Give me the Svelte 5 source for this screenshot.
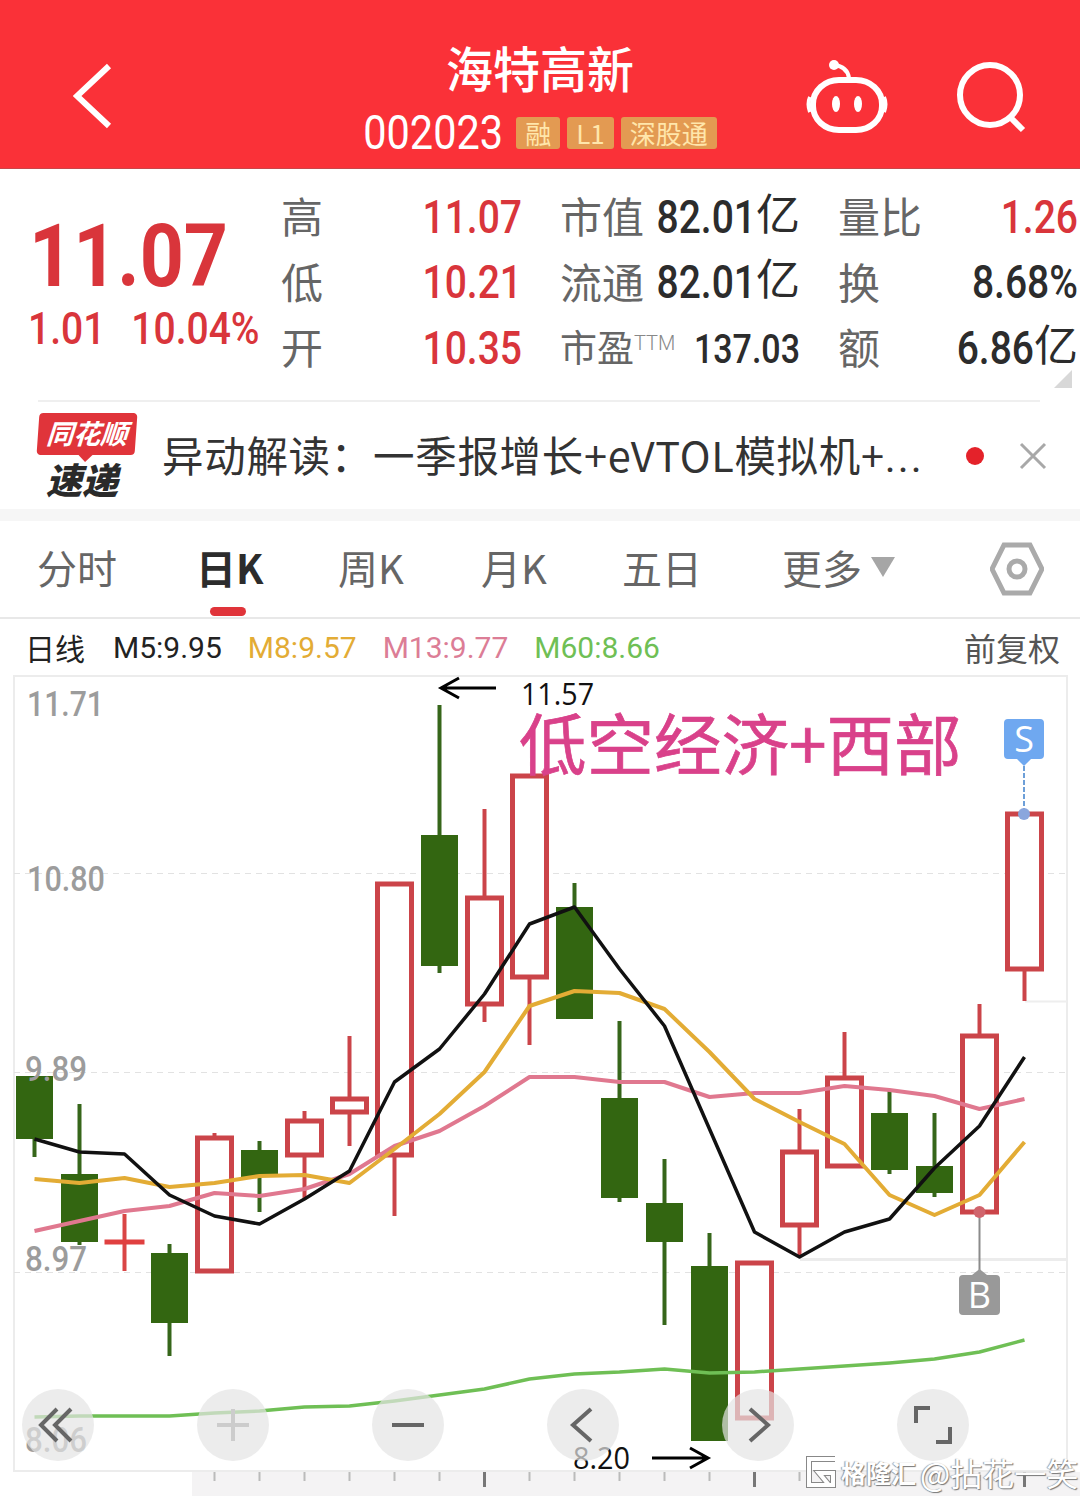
<script>
	const X0 = 34.5;
	const STEP = 45;
	// top/bottom of wick and body, in page y
	const candles = [
		{ up: false, wt: 1077, bt: 1077, bb: 1140, wb: 1158 },
		{ up: false, wt: 1105, bt: 1175, bb: 1243, wb: 1246 },
		{ up: true, wt: 1215, bt: 1243, bb: 1244, wb: 1272, cross: true },
		{ up: false, wt: 1245, bt: 1254, bb: 1324, wb: 1357 },
		{ up: true, wt: 1134, bt: 1139, bb: 1272, wb: 1272 },
		{ up: false, wt: 1142, bt: 1151, bb: 1178, wb: 1213 },
		{ up: true, wt: 1112, bt: 1122, bb: 1156, wb: 1200 },
		{ up: true, wt: 1037, bt: 1100, bb: 1113, wb: 1147 },
		{ up: true, wt: 885, bt: 885, bb: 1156, wb: 1217 },
		{ up: false, wt: 706, bt: 836, bb: 967, wb: 974 },
		{ up: true, wt: 810, bt: 899, bb: 1005, wb: 1023 },
		{ up: true, wt: 777, bt: 777, bb: 978, wb: 1046 },
		{ up: false, wt: 884, bt: 908, bb: 1020, wb: 1020 },
		{ up: false, wt: 1022, bt: 1099, bb: 1199, wb: 1203 },
		{ up: false, wt: 1160, bt: 1204, bb: 1243, wb: 1326 },
		{ up: false, wt: 1234, bt: 1267, bb: 1442, wb: 1442 },
		{ up: true, wt: 1264, bt: 1264, bb: 1419, wb: 1419 },
		{ up: true, wt: 1110, bt: 1153, bb: 1226, wb: 1258 },
		{ up: true, wt: 1033, bt: 1079, bb: 1167, wb: 1167 },
		{ up: false, wt: 1092, bt: 1114, bb: 1171, wb: 1175 },
		{ up: false, wt: 1114, bt: 1167, bb: 1194, wb: 1198 },
		{ up: true, wt: 1005, bt: 1037, bb: 1213, wb: 1213 },
		{ up: true, wt: 815, bt: 815, bb: 970, wb: 1002 }
	];

	const m5 = [1140, 1153, 1155, 1196, 1217, 1225, 1200, 1172, 1083, 1050, 995, 925, 908, 970, 1027, 1130, 1233, 1258, 1233, 1220, 1169, 1127, 1058];
	const m8 = [1180, 1184, 1179, 1188, 1184, 1177, 1176, 1184, 1150, 1115, 1073, 1007, 992, 994, 1010, 1053, 1100, 1123, 1145, 1196, 1216, 1196, 1143];
	const m13 = [1232, 1222, 1212, 1207, 1194, 1197, 1190, 1175, 1147, 1132, 1107, 1078, 1078, 1083, 1083, 1098, 1094, 1094, 1087, 1091, 1097, 1110, 1100];
	const m60 = [1418, 1417, 1417, 1417, 1414, 1412, 1408, 1407, 1402, 1396, 1390, 1380, 1375, 1373, 1370, 1374, 1373, 1370, 1367, 1364, 1360, 1353, 1341];

	const toPoints = (ys) => ys.map((y, i) => `${X0 + i * STEP},${y}`).join(' ');

	const lines = [
		{ ys: m60, color: '#6fbf55', width: 3.5 },
		{ ys: m13, color: '#e0788f', width: 4 },
		{ ys: m8, color: '#e3ac35', width: 4 },
		{ ys: m5, color: '#111', width: 3.5 }
	];

	const ticks = [4, 5, 6, 7, 8, 9, 10, 11, 12, 13, 14, 15, 16, 17, 18, 19, 20, 21, 22];
	const majorTicks = [10, 16, 22];
	const tabs = ['分时', '日K', '周K', '月K', '五日'];
</script>

<div class="page">
	<header class="top">
		<svg class="back" width="40" height="66" viewBox="0 0 40 66">
			<path d="M36 3 L4 33 L36 63" />
		</svg>
		<div class="title">
			<div class="name">海特高新</div>
			<div class="code-row">
				<span class="code">002023</span>
				<span class="tag">融</span>
				<span class="tag">L1</span>
				<span class="tag">深股通</span>
			</div>
		</div>
		<div class="top-icons">
			<svg width="82" height="76" viewBox="0 0 82 76">
				<rect x="7" y="20" width="69" height="50" rx="26" ry="24" class="line" />
				<path d="M4 37 Q1 44 4 52 M78 37 Q81 44 78 52" class="line thin" />
				<path d="M28 5 C37 6 42 11 43 18" class="line thin" />
				<circle cx="28" cy="5" r="5" fill="#fff" />
				<ellipse cx="30" cy="44" rx="4" ry="8" fill="#fff" />
				<ellipse cx="52" cy="44" rx="4" ry="8" fill="#fff" />
			</svg>
			<svg width="72" height="76" viewBox="0 0 72 76">
				<circle cx="35" cy="35" r="30" class="line" />
				<path d="M56 58 L68 70" class="line" />
			</svg>
		</div>
	</header>

	<section class="quote">
		<div class="price">
			<div class="big">11.07</div>
			<div class="change"><span>1.01</span><span>10.04%</span></div>
		</div>
		<div class="stats">
			<div class="cell"><span class="k">高</span><span class="v red">11.07</span></div>
			<div class="cell"><span class="k">市值</span><span class="v">82.01<i>亿</i></span></div>
			<div class="cell"><span class="k">量比</span><span class="v red">1.26</span></div>
			<div class="cell"><span class="k">低</span><span class="v red">10.21</span></div>
			<div class="cell"><span class="k">流通</span><span class="v">82.01<i>亿</i></span></div>
			<div class="cell"><span class="k">换</span><span class="v">8.68%</span></div>
			<div class="cell"><span class="k">开</span><span class="v red">10.35</span></div>
			<div class="cell"><span class="k pe">市盈<sup>TTM</sup></span><span class="v small">137.03</span></div>
			<div class="cell"><span class="k">额</span><span class="v">6.86<i>亿</i></span></div>
		</div>
		<span class="corner"></span>
	</section>

	<section class="news">
		<div class="logo">
			<div class="bubble">同花顺</div>
			<div class="sudi">速递</div>
		</div>
		<div class="headline">异动解读：一季报增长+eVTOL模拟机+<span class="more">...</span></div>
		<span class="dot"></span>
		<svg width="30" height="30" viewBox="0 0 30 30" class="close">
			<path d="M3 3 L27 27 M27 3 L3 27" />
		</svg>
	</section>

	<nav class="tabs">
		{#each tabs as tab, i}
			<div class="tab" class:active={i === 1}>{tab}</div>
		{/each}
		<div class="tab">更多<span class="caret"></span></div>
		<svg width="54" height="54" viewBox="0 0 54 54" class="gear">
			<path d="M14 3 H40 L52 27 L40 51 H14 L2 27 Z" />
			<circle cx="27" cy="27" r="8" />
		</svg>
	</nav>

	<div class="legend">
		<span class="ri">日线</span>
		<span class="ma">M5:9.95</span>
		<span class="ma m8">M8:9.57</span>
		<span class="ma m13">M13:9.77</span>
		<span class="ma m60">M60:8.66</span>
		<span class="fq">前复权</span>
	</div>

	<div class="chart">
		<svg width="1080" height="821" viewBox="0 676 1080 821">
			<rect x="192" y="1473" width="888" height="24" fill="#f4f3f4" />
			<rect x="14" y="677" width="1053" height="795" fill="none" stroke="#ececec" stroke-width="2" />
			<g stroke="#e2e2e2" stroke-dasharray="6 5">
				<line x1="14" x2="1066" y1="874.5" y2="874.5" />
				<line x1="14" x2="1066" y1="1073.5" y2="1073.5" />
				<line x1="14" x2="1066" y1="1273.5" y2="1273.5" />
			</g>
			<line x1="800" x2="1067" y1="1260.5" y2="1260.5" stroke="#ececec" stroke-width="3" />
			<line x1="1025" x2="1067" y1="1002.5" y2="1002.5" stroke="#eee" stroke-width="2" />

			{#each ticks as t}
				<line
					x1={X0 + t * STEP}
					x2={X0 + t * STEP}
					y1="1473"
					y2={majorTicks.includes(t) ? 1488 : 1482}
					stroke={majorTicks.includes(t) ? '#777' : '#bbb'}
					stroke-width={majorTicks.includes(t) ? 3 : 2}
				/>
			{/each}

			{#each candles as c, i}
				{@const x = X0 + i * STEP}
				{#if c.cross}
					<line x1={x} x2={x} y1={c.wt} y2={c.wb} stroke="#d94545" stroke-width="4" />
					<line x1={x - 20} x2={x + 20} y1={c.bt} y2={c.bt} stroke="#e04040" stroke-width="5" />
				{:else if c.up}
					<line x1={x} x2={x} y1={c.wt} y2={c.bt} class="red-stroke" stroke-width="4" />
					<line x1={x} x2={x} y1={c.bb} y2={c.wb} class="red-stroke" stroke-width="4" />
					<rect x={x - 17} y={c.bt} width="34" height={c.bb - c.bt} fill="#fff" class="red-stroke" stroke-width="5" />
				{:else}
					<line x1={x} x2={x} y1={c.wt} y2={c.wb} stroke="#36661a" stroke-width="4" />
					<rect x={x - 18.5} y={c.bt} width="37" height={c.bb - c.bt} fill="#336611" />
				{/if}
			{/each}

			{#each lines as l}
				<polyline points={toPoints(l.ys)} fill="none" stroke={l.color} stroke-width={l.width} stroke-linejoin="round" />
			{/each}

			<g class="axis">
				<text x="27" y="717" textLength="77" lengthAdjust="spacingAndGlyphs">11.71</text>
				<text x="27" y="892" textLength="78" lengthAdjust="spacingAndGlyphs">10.80</text>
				<text x="25" y="1082" textLength="62" lengthAdjust="spacingAndGlyphs">9.89</text>
				<text x="25" y="1272" textLength="62" lengthAdjust="spacingAndGlyphs">8.97</text>
				<text x="25" y="1453" textLength="62" lengthAdjust="spacingAndGlyphs">8.06</text>
			</g>

			<!-- hand-drawn notes on the chart -->
			<path d="M496 689 H441 M459 679 L441 689 L459 699" class="arrow" />
			<text x="521" y="706" class="note" textLength="73" lengthAdjust="spacingAndGlyphs">11.57</text>
			<text x="519" y="771" class="pink">低空经济+西部</text>
			<text x="573" y="1470" class="note" textLength="57" lengthAdjust="spacingAndGlyphs">8.20</text>
			<path d="M652 1459 H708 M690 1449 L708 1459 L690 1469" class="arrow" />

			<!-- buy/sell markers -->
			<path d="M1024 760 V813" stroke="#6d9fd8" stroke-width="2" stroke-dasharray="5 2" />
			<circle cx="1024" cy="815" r="6" fill="#8aa6dd" />
			<path d="M1008 720 H1040 Q1044 720 1044 724 V756 Q1044 760 1040 760 H1031 L1024 767 L1017 760 H1008 Q1004 760 1004 756 V724 Q1004 720 1008 720 Z" fill="#6fa8f0" />
			<text x="1024" y="753" class="mark">S</text>
			<path d="M979.5 1213 V1272" stroke="#8b8b8b" stroke-width="2" />
			<circle cx="979.5" cy="1213" r="6" fill="#d0646c" />
			<path d="M963 1276 H972 L979.5 1270 L987 1276 H996 Q1000 1276 1000 1280 V1312 Q1000 1316 996 1316 H963 Q959 1316 959 1312 V1280 Q959 1276 963 1276 Z" fill="#999" />
			<text x="979.5" y="1309" class="mark">B</text>
		</svg>

		<div class="controls">
			<button type="button" aria-label="back">
				<svg width="40" height="40" viewBox="0 0 40 40"><path d="M19 4 L3 20 L19 36 M33 4 L17 20 L33 36" /></svg>
			</button>
			<button type="button" aria-label="zoom in" class="off">
				<svg width="40" height="40" viewBox="0 0 40 40"><path d="M4 20 H36 M20 4 V36" /></svg>
			</button>
			<button type="button" aria-label="zoom out">
				<svg width="40" height="40" viewBox="0 0 40 40"><path d="M4 20 H36" /></svg>
			</button>
			<button type="button" aria-label="previous">
				<svg width="40" height="40" viewBox="0 0 40 40"><path d="M28 4 L10 20 L28 36" /></svg>
			</button>
			<button type="button" aria-label="next">
				<svg width="40" height="40" viewBox="0 0 40 40"><path d="M12 4 L30 20 L12 36" /></svg>
			</button>
			<button type="button" aria-label="fullscreen">
				<svg width="40" height="40" viewBox="0 0 40 40"><path d="M3 18 V3 H17 M37 22 V37 H23" /></svg>
			</button>
		</div>

		<div class="watermark">
			<svg width="32" height="34" viewBox="0 0 32 34">
				<path d="M30 4 H4 V30 H28 V18 H14 L24 30" class="wm-back" />
				<path d="M30 4 H4 V30 H28 V18 H14 L24 30" class="wm-front" />
			</svg>
			<span class="wm-small">格隆汇</span>
			<span class="wm-big">@拈花一笑</span>
		</div>
	</div>
</div>

<style>
	:global(body) {
		background: #fff;
	}

	.page {
		width: 1080px;
		height: 1497px;
		overflow: hidden;
		background: #fff;
		font-family: 'Noto Sans CJK SC', sans-serif;
	}

	.top {
		display: grid;
		grid-template-columns: 1fr auto 1fr;
		height: 168px;
		background: #fa3138;
		border-bottom: 1px solid #c9464a;
		color: #fff;
	}

	.back {
		margin: 63px 0 0 73px;
	}

	.back path {
		fill: none;
		stroke: #fff;
		stroke-width: 6;
	}

	.title {
		display: flex;
		flex-direction: column;
		align-items: center;
		padding-top: 36px;
	}

	.name {
		font-size: 47px;
		line-height: 62px;
		font-weight: 500;
		height: 74px;
		transform: scaleY(1.04);
	}

	.code-row {
		display: flex;
		align-items: center;
		gap: 7px;
		height: 46px;
	}

	.code {
		font-family: Roboto, sans-serif;
		font-size: 41.5px;
		margin-right: 6px;
		line-height: 46px;
		transform: scaleY(1.17);
	}

	.tag {
		height: 32px;
		line-height: 31px;
		padding: 0 9px;
		border-radius: 3px;
		background: #e39a52;
		color: #ffe6ab;
		font-size: 26px;
	}

	.top-icons {
		display: flex;
		justify-content: flex-end;
		align-items: flex-start;
		gap: 67px;
		padding: 60px 53px 0 0;
	}

	.line {
		fill: none;
		stroke: #fff;
		stroke-width: 6;
	}

	.thin {
		stroke-width: 4;
	}

	.quote {
		position: relative;
		display: flex;
		height: 233px;
	}

	.quote::after {
		content: '';
		position: absolute;
		left: 38px;
		right: 40px;
		bottom: 0;
		border-bottom: 2px solid #efefef;
	}

	.price {
		width: 281px;
		flex: none;
		box-sizing: border-box;
		padding: 49px 0 0 28px;
		color: #d9353b;
		font-family: Roboto, sans-serif;
	}

	.big {
		font-size: 77px;
		line-height: 76px;
		font-weight: 700;
		margin-left: 1px;
		transform: scaleY(1.14);
		transform-origin: left center;
	}

	.change {
		display: flex;
		gap: 26px;
		font-size: 39px;
		line-height: 46px;
		font-weight: 500;
		margin-top: 12px;
		transform: scaleY(1.14);
	}

	.stats {
		display: grid;
		grid-template-columns: 241px 240px 240px;
		grid-auto-rows: 65.5px;
		column-gap: 38px;
		padding-top: 16px;
	}

	.cell {
		display: flex;
		justify-content: space-between;
		align-items: center;
		white-space: nowrap;
	}

	.k {
		margin-top: -6px;
		font-size: 42px;
		color: #666;
	}

	.v {
		display: inline-block;
		font-family: Roboto, sans-serif;
		font-size: 39px;
		line-height: 46px;
		font-weight: 500;
		color: #2c2c2c;
		transform: scaleY(1.17);
	}

	.v i {
		display: inline-block;
		font-family: 'Noto Sans CJK SC', sans-serif;
		font-style: normal;
		font-weight: 400;
		font-size: 44px;
		line-height: 30px;
		transform: scaleY(0.84);
	}

	.v.small {
		font-size: 34px;
	}

	.red {
		color: #d9353b;
	}

	.pe {
		font-size: 37px;
	}

	.pe sup {
		font-size: 20px;
		font-family: Roboto, sans-serif;
		font-weight: 300;
		color: #888;
		vertical-align: 12px;
		line-height: 0;
	}

	.corner {
		position: absolute;
		right: 8px;
		bottom: 14px;
		width: 0;
		height: 0;
		border-left: 18px solid transparent;
		border-bottom: 18px solid #d8d8d8;
	}

	.news {
		display: flex;
		align-items: center;
		height: 107px;
		padding-left: 38px;
		border-bottom: 12px solid #f6f6f6;
	}

	.logo {
		width: 98px;
		flex: none;
		margin-right: 26px;
		text-align: center;
	}

	.bubble {
		position: relative;
		height: 42px;
		line-height: 40px;
		background: #e0343a;
		border-radius: 4px;
		color: #fff;
		font-size: 27px;
		font-weight: 700;
		font-style: italic;
		white-space: nowrap;
		transform: skewX(-4deg);
	}

	.bubble::after {
		content: '';
		position: absolute;
		left: 42px;
		top: 42px;
		border: 7px solid transparent;
		border-top-color: #e0343a;
		border-bottom: 0;
	}

	.sudi {
		margin: 3px 10px 0 0;
		font-size: 36px;
		line-height: 40px;
		font-weight: 900;
		font-style: italic;
		color: #2a2a2a;
	}

	.headline {
		width: 780px;
		flex: none;
		white-space: nowrap;
		font-size: 41.5px;
		letter-spacing: 0.7px;
		color: #333;
		margin-top: -4px;
	}

	.more {
		font-family: Roboto, sans-serif;
		letter-spacing: 2px;
	}

	.dot {
		width: 18px;
		height: 18px;
		margin-left: 24px;
		border-radius: 50%;
		background: #e4222a;
	}

	.close {
		margin-left: 34px;
	}

	.close path {
		fill: none;
		stroke: #a8a8a8;
		stroke-width: 3;
	}

	.tabs {
		display: grid;
		grid-template-columns: 159px 142px 143px 141px 160px 208px auto;
		align-items: center;
		height: 96px;
		padding-left: 37px;
		border-bottom: 2px solid #e8e8e8;
	}

	.tab {
		position: relative;
		display: flex;
		align-items: center;
		height: 56px;
		line-height: 56px;
		margin-top: -4px;
		font-size: 40px;
		color: #666;
		white-space: nowrap;
	}

	.tab.active {
		font-weight: 700;
		color: #2c2c2c;
	}

	.tab.active::after {
		content: '';
		position: absolute;
		left: 14px;
		top: 68px;
		width: 36px;
		height: 9px;
		border-radius: 5px;
		background: #e0343a;
	}

	.caret {
		margin-left: 9px;
		border: 12px solid transparent;
		border-top: 20px solid #a6a6a6;
		border-bottom: 0;
	}

	.gear path,
	.gear circle {
		fill: none;
		stroke: #aaa;
		stroke-width: 5;
	}

	.legend {
		display: flex;
		align-items: center;
		height: 56px;
		padding-left: 25px;
		font-family: Roboto, sans-serif;
		font-size: 30px;
		color: #222;
	}

	.ri {
		font-family: 'Noto Sans CJK SC', sans-serif;
		width: 88px;
	}

	.ma {
		margin-right: 26px;
	}

	.m8 {
		color: #e3ac35;
	}

	.m13 {
		color: #dc7d96;
	}

	.m60 {
		color: #6fbf55;
	}

	.fq {
		margin-left: auto;
		margin-right: 20px;
		font-family: 'Noto Sans CJK SC', sans-serif;
		font-size: 32px;
		color: #555;
	}

	.chart {
		position: relative;
		height: 821px;
	}

	.chart > svg {
		display: block;
	}

	.red-stroke {
		stroke: #cb4449;
	}

	.axis text {
		font-family: Roboto, sans-serif;
		font-size: 35px;
		font-weight: 500;
		fill: #9c9c9c;
	}

	.arrow {
		fill: none;
		stroke: #000;
		stroke-width: 3;
	}

	.note {
		font-family: 'Open Sans', sans-serif;
		font-size: 31px;
		fill: #111;
	}

	.pink {
		font-family: 'Noto Sans CJK SC', sans-serif;
		font-size: 67.5px;
		fill: #d9418a;
		stroke: #d9418a;
		stroke-width: 0.7;
	}

	.mark {
		font-family: 'Open Sans', sans-serif;
		font-size: 36px;
		fill: #fff;
		text-anchor: middle;
	}

	.controls {
		position: absolute;
		left: 22px;
		top: 714px;
		display: flex;
		gap: 103px;
	}

	.controls button {
		display: flex;
		align-items: center;
		justify-content: center;
		width: 72px;
		height: 72px;
		padding: 0;
		border: 0;
		border-radius: 50%;
		background: rgba(228, 228, 228, 0.7);
	}

	.controls path {
		fill: none;
		stroke: #666;
		stroke-width: 4;
	}

	.controls .off path {
		stroke: #ccc;
	}

	.watermark {
		position: absolute;
		left: 805px;
		top: 774px;
		display: flex;
		align-items: center;
		gap: 4px;
		color: #fff;
		text-shadow: 1px 1px 1px #777, -1px 0 1px #999;
		white-space: nowrap;
	}

	.wm-small {
		font-size: 25px;
		font-weight: 700;
	}

	.wm-big {
		font-size: 32px;
	}

	.watermark path {
		fill: none;
		stroke-width: 4;
	}

	.watermark .wm-back {
		stroke: #888;
		stroke-width: 6;
	}

	.wm-front {
		stroke: #fff;
	}
</style>
